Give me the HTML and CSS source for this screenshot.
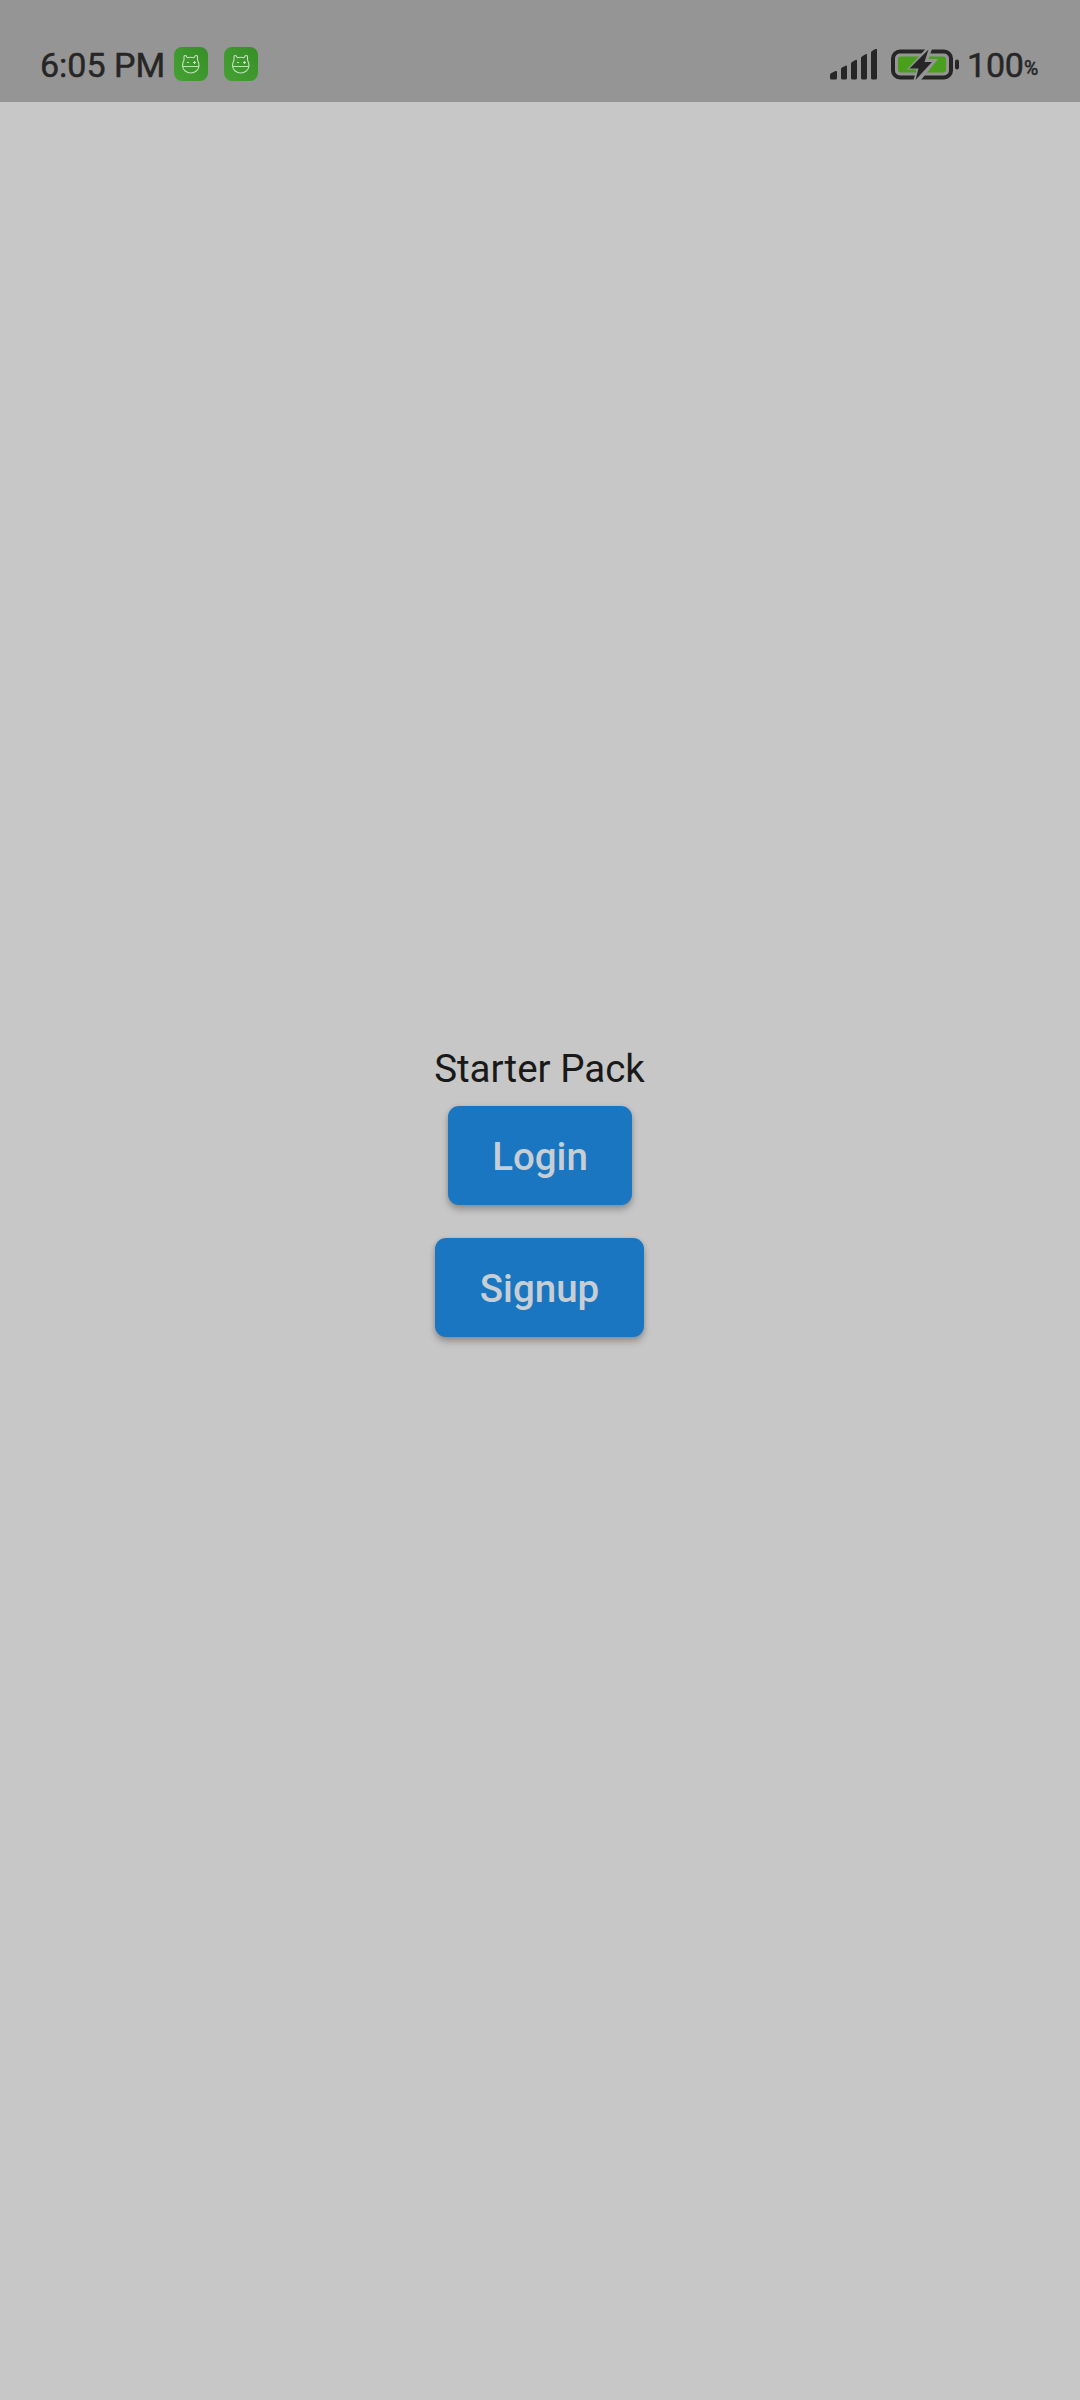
FILE: index.html
```html
<!DOCTYPE html>
<html lang="en">
<head>
<meta charset="utf-8">
<title>Starter Pack</title>
<link rel="stylesheet" href="styles.css">
</head>
<body>
<svg class="defs" width="0" height="0" aria-hidden="true">
  <defs>
    <linearGradient id="green" x1="0" y1="1" x2="1" y2="0"><stop offset="0" stop-color="#46a133"/><stop offset="1" stop-color="#358f27"/></linearGradient>
    <symbol id="app" viewBox="0 0 34 34">
      <rect width="34" height="34" rx="8" fill="url(#green)"/>
      <g fill="none" stroke="#c3dfbe" stroke-width="1.1">
        <path d="M10 13V9.500Q10.500 8 12 8.700L13.300 10.700Q16.700 9.700 20 10.700L21.300 8.700Q23 8 23.500 9.500V13Q25 16 25 19C24.500 23 21 26 16.700 26S9 23 8.500 19Q8.500 16 10 13zM8.500 19.500H25"/>
        <path d="M13 15.500h2M19 15.500h3M20.500 14v3"/>
      </g>
    </symbol>
  </defs>
</svg>
<header class="status">
  <span class="time">6:05 PM</span>
  <svg class="app" width="34" height="34"><use href="#app"/></svg>
  <svg class="app" width="34" height="34"><use href="#app"/></svg>
  <svg class="signal" width="48" height="31" viewBox="0 0 48 31" fill="#262626">
    <path d="M0 26q0-1 1-1.700L5.500 22q1.500-.5 1.500 1v6q0 1.500-1.500 1.500h-4Q0 30.500 0 29z"/>
    <path d="M11 20q0-1 1-1.500l3.500-1.800q1.500-.5 1.500 1V29q0 1.500-1.500 1.500h-3Q11 30.500 11 29z"/>
    <path d="M21 14.500q0-1 1-1.600l3.500-2q1.500-.6 1.500 1V29q0 1.500-1.500 1.500h-3Q21 30.500 21 29z"/>
    <path d="M31 9q0-1 1-1.600l3.500-2.200q1.500-.7 1.500 1V29q0 1.500-1.500 1.500h-3Q31 30.500 31 29z"/>
    <path d="M41 3.500q0-1 1-1.600L45.500 0Q47 -.700 47 1V29q0 1.500-1.500 1.500h-3Q41 30.500 41 29z"/>
  </svg>
  <svg class="battery" width="69" height="31" viewBox="0 0 69 31">
    <rect x="2" y="2.500" width="58" height="26" rx="7" fill="none" stroke="#262626" stroke-width="4"/>
    <rect x="7" y="7.500" width="48" height="16" rx="3" fill="#4a9f1d"/>
    <path d="M34.500 0H41L37.500 10H47L30 31H22.500L25.500 20.500H16z" fill="#959595"/>
    <path d="M37.500.5 18.500 19.500H27.500L24.500 31 41 13H33.500z" fill="#262626"/>
    <rect x="64" y="10.500" width="4" height="10" rx="2" fill="#262626"/>
  </svg>
  <span class="percent">100</span><span class="sign">%</span>
</header>
<main class="content">
  <p class="title">Starter Pack</p>
  <button class="button login">Login</button>
  <button class="button signup">Signup</button>
</main>
</body>
</html>
```
FILE: styles.css
```css
* { box-sizing: border-box; }
body {
  margin: 0;
  height: 2400px;
  background: #c7c7c7;
  font-family: Roboto, sans-serif;
  overflow: hidden;
}
.defs { display: block; }
.status {
  height: 102px;
  padding: 26px 40px 0 40px;
  display: flex;
  align-items: center;
  background: #959595;
  color: #262626;
  font-size: 34px;
  line-height: 40px;
  white-space: nowrap;
  -webkit-text-stroke: .5px #262626;
}
.time { width: 134px; padding-top: 2px; }
.app, .signal, .battery { -webkit-text-stroke: 0; }
.app { margin-right: 16px; }
.signal { margin-left: auto; }
.battery { margin-left: 13px; }
.percent { width: 57px; margin-left: 7px; padding-top: 2px; letter-spacing: -.2px; }
.sign { width: 16px; font-size: 19.5px; letter-spacing: -.5px; padding-top: 9px; }
.content {
  display: flex;
  flex-direction: column;
  align-items: center;
  padding-top: 944px;
}
.title {
  margin: 0 1px 15px 0;
  font-size: 38.5px;
  line-height: 45px;
  color: #191919;
}
.button {
  height: 99px;
  margin-bottom: 33px;
  padding: 1px 0 0;
  border: 0;
  border-radius: 11px;
  background: #1a76c1;
  color: #c7ced4;
  font: 500 38.5px Roboto, sans-serif;
  box-shadow: 0 5px 7px rgba(0, 0, 0, .22), 0 1px 5px rgba(0, 0, 0, .14);
}
.login { width: 184px; }
.signup { width: 209px; margin-right: 1px; }
```
